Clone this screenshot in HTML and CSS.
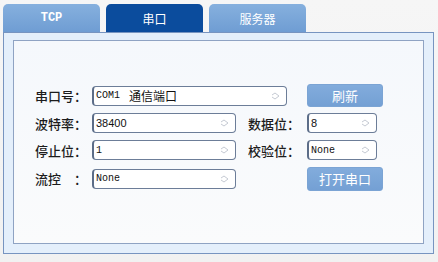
FILE: index.html
```html
<!DOCTYPE html>
<html lang="zh-CN">
<head>
<meta charset="UTF-8" />
<title>串口设置</title>
<link rel="stylesheet" href="styles.css">
</head>
<body>
  <div id="app">
    <div class="tabs">
      <div class="tab tab-mono">TCP</div>
      <div class="tab active">串口</div>
      <div class="tab">服务器</div>
    </div>
    <div class="panel">
      <div class="inner">
        <div class="form">
          <label class="lbl">串口号：</label>
          <div class="sel sel-wide"><span class="mono com">COM1</span>通信端口<svg class="arr" width="9" height="8" viewBox="0 0 9 8"><path d="M1 3 L4 1 L8 4 L4 7 L1 5" fill="none" stroke="#c5cad3" stroke-width="1"/></svg></div>
          <button class="btn">刷新</button>

          <label class="lbl">波特率：</label>
          <div class="sel">38400<svg class="arr" width="9" height="8" viewBox="0 0 9 8"><path d="M1 3 L4 1 L8 4 L4 7 L1 5" fill="none" stroke="#c5cad3" stroke-width="1"/></svg></div>
          <label class="lbl lbl2">数据位：</label>
          <div class="sel sel-small">8<svg class="arr" width="9" height="8" viewBox="0 0 9 8"><path d="M1 3 L4 1 L8 4 L4 7 L1 5" fill="none" stroke="#c5cad3" stroke-width="1"/></svg></div>

          <label class="lbl">停止位：</label>
          <div class="sel mono">1<svg class="arr" width="9" height="8" viewBox="0 0 9 8"><path d="M1 3 L4 1 L8 4 L4 7 L1 5" fill="none" stroke="#c5cad3" stroke-width="1"/></svg></div>
          <label class="lbl lbl2">校验位：</label>
          <div class="sel sel-small mono">None<svg class="arr" width="9" height="8" viewBox="0 0 9 8"><path d="M1 3 L4 1 L8 4 L4 7 L1 5" fill="none" stroke="#c5cad3" stroke-width="1"/></svg></div>

          <label class="lbl">流控　：</label>
          <div class="sel mono">None<svg class="arr" width="9" height="8" viewBox="0 0 9 8"><path d="M1 3 L4 1 L8 4 L4 7 L1 5" fill="none" stroke="#c5cad3" stroke-width="1"/></svg></div>
          <button class="btn btn-open">打开串口</button>
        </div>
      </div>
    </div>
  </div>
</body>
</html>
```
FILE: styles.css
```css
* {
  box-sizing: border-box;
}
body {
  margin: 0;
  width: 438px;
  height: 262px;
  overflow: hidden;
  background: linear-gradient(#f6f6f6, #f1f1f1);
  font-family: "Noto Sans CJK SC", "Liberation Sans", sans-serif;
  color: #1e1e1e;
}
#app {
  padding: 4px 0 0 3px;
}
.tabs {
  display: flex;
  gap: 6px;
  height: 28px;
}
.tab {
  width: 97px;
  height: 28px;
  border-radius: 5px 5px 0 0;
  background: linear-gradient(#86b0de, #6f9dd3);
  color: #fff;
  font-size: 12px;
  display: flex;
  align-items: center;
  justify-content: center;
}
.tab-mono {
  font-family: "Liberation Mono", monospace;
  font-weight: bold;
  font-size: 12px;
}
.tab.active {
  background: #0b4c9d;
}
.panel {
  width: 431px;
  height: 222px;
  background: #e4effb;
  border: 1px solid #7794c0;
  padding: 7px 9px 9px 9px;
}
.inner {
  height: 100%;
  background: linear-gradient(#f5f8fc, #fafbfc);
  border: 1px solid #8fa3c3;
  padding: 43px 0 0 21px;
}
.form {
  display: grid;
  grid-template-columns: 57px 144px 12px 59px 76px;
  grid-template-rows: 23px 22px 22px 25px;
  row-gap: 5px;
  align-items: center;
}
.lbl {
  grid-column: 1;
  font-size: 13px;
  font-weight: 500;
  color: #1c1c1c;
  white-space: nowrap;
}
.lbl2 {
  grid-column: 4;
}
.sel {
  position: relative;
  height: 20px;
  background: #fff;
  border: 1px solid #6c7d98;
  border-left: 2px solid #5c6d88;
  border-radius: 4px;
  padding-left: 2px;
  font-size: 11px;
  font-family: "Liberation Sans", "Noto Sans CJK SC", sans-serif;
  display: flex;
  align-items: center;
  color: #111;
}
.sel-wide {
  grid-column: 2 / 5;
  width: 195px;
  font-size: 12px;
  font-family: "Noto Sans CJK SC", sans-serif;
}
.sel-small {
  width: 70px;
}
.mono {
  font-family: "Liberation Mono", monospace;
  font-size: 10px;
}
.com {
  margin-right: 9px;
}
.arr {
  position: absolute;
  right: 6px;
  top: 5px;
}
.btn {
  grid-column: 5;
  width: 76px;
  height: 23px;
  border: 1px solid #7ba4d4;
  border-radius: 3px;
  background: linear-gradient(#82acdc, #74a0d4);
  color: #fff;
  font-family: "Noto Sans CJK SC", sans-serif;
  font-size: 13px;
  padding: 0;
}
.btn-open {
  height: 24px;
}
```
